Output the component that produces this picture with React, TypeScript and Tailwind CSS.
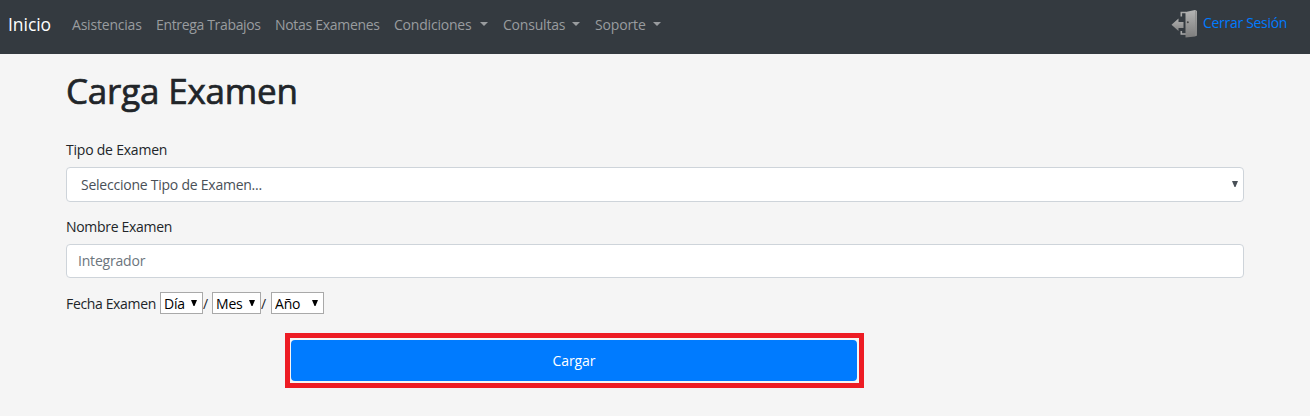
const links = [
  { label: 'Asistencias', box: 'w-[84px]', track: 'tracking-[-0.2px]' },
  { label: 'Entrega Trabajos', box: 'w-[119px]', track: 'tracking-[-0.34px]' },
  { label: 'Notas Examenes', box: 'w-[119px]', track: 'tracking-[-0.3px]' },
];

const menus = [
  { label: 'Condiciones', box: 'w-[109px]', text: 'w-[86px]', track: 'tracking-[-0.2px]' },
  { label: 'Consultas', box: 'w-[92px]', text: 'w-[69px]', track: 'tracking-[-0.2px]' },
  { label: 'Soporte', box: 'w-[80px]', text: 'w-[58px]', track: 'tracking-[-0.15px]' },
];

const dates = [
  { label: 'Día', box: 'w-[43px]', gap: 'w-[9px]' },
  { label: 'Mes', box: 'w-[49px]', gap: 'w-[10px]' },
  { label: 'Año', box: 'w-[53px]', gap: '' },
];

function DoorIcon() {
  return (
    <svg width="27" height="30" viewBox="0 0 27 30" className="block shrink-0">
      <defs>
        <linearGradient id="door" x1="0" y1="0" x2="0" y2="1">
          <stop offset="0" stopColor="#b4b4b4" />
          <stop offset="1" stopColor="#7c7c7c" />
        </linearGradient>
        <linearGradient id="arrow" x1="0" y1="0" x2="0" y2="1">
          <stop offset="0" stopColor="#b0b0b0" />
          <stop offset="1" stopColor="#858585" />
        </linearGradient>
      </defs>
      <path d="M10.3 7.5V3.5H15M10.3 22v3H15" fill="none" stroke="#a8a8a8" strokeWidth="1.6" />
      <path d="M14.5 3 24 1l2 1V26.5L24 27.5l-9.5 1Z" fill="url(#door)" />
      <path d="M24.8 1.8V27" stroke="#8b8b8b" strokeWidth="1" />
      <circle cx="16.8" cy="13.3" r="1" fill="#444" />
      <path d="M.5 15.7 7.5 9.5V13H12.5v6H7.5V22Z" fill="url(#arrow)" />
    </svg>
  );
}

function Arrow() {
  return (
    <svg width="6" height="6" viewBox="0 0 6 6" className="block">
      <path d="M0 0h6L3.5 6h-1Z" fill="currentColor" />
    </svg>
  );
}

export default function App() {
  return (
    <div className="h-[416px] w-[1310px] overflow-hidden bg-[#f5f5f5] font-['Open_Sans','Noto_Sans',sans-serif] text-[14px] leading-[21px] whitespace-nowrap text-[#212529]">
      <nav className="flex h-[54px] bg-[#343a40] text-[#999c9f]">
        <a className="w-[72px] pt-[14px] pl-[8px] text-[17.5px] tracking-[-0.05px] text-white">Inicio</a>
        <div className="flex flex-1 pt-[14px]">
          {links.map((l) => (
            <a key={l.label} className={`${l.box} ${l.track}`}>{l.label}</a>
          ))}
          {menus.map((m) => (
            <a key={m.label} className={`flex ${m.box} ${m.track}`}>
              <span className={m.text}>{m.label}</span>
              <svg width="8" height="4" viewBox="0 0 8 4" className="mt-[8px]">
                <path d="M0 0h8L4 4Z" fill="currentColor" />
              </svg>
            </a>
          ))}
        </div>
        <a className="flex w-[139px] pt-[9px] text-[#007bff]">
          <DoorIcon />
          <span className="ml-[5px] pt-[3px] tracking-[-0.3px]">Cerrar Sesión</span>
        </a>
      </nav>
      <main className="px-[66px]">
        <h1 className="h-[85px] pt-[16px] text-[35px] leading-[42px] font-medium tracking-[-0.2px] [-webkit-text-stroke:0.7px_#212529]">Carga Examen</h1>
        <label className="block h-[28px] tracking-[-0.22px]">Tipo de Examen</label>
        <div className="relative h-[35px] text-[#495057]">
          <select className="block h-full w-full appearance-none rounded-[4px] border border-[#ced4da] bg-white pl-[14px] tracking-[-0.24px]">
            <option>Seleccione Tipo de Examen...</option>
          </select>
          <span className="absolute top-[14px] right-[6px]"><Arrow /></span>
        </div>
        <label className="mt-[14px] block h-[28px] tracking-[-0.3px]">Nombre Examen</label>
        <input
          placeholder="Integrador"
          className="block h-[34px] w-full rounded-[4px] border border-[#ced4da] bg-white pb-[2px] pl-[11px] tracking-[-0.2px] placeholder:text-[#6c757d]"
        />
        <div className="mt-[14px] flex h-[22px]">
          <span className="w-[94px] pt-[1px] tracking-[-0.35px]">Fecha Examen</span>
          {dates.map((d) => (
            <div key={d.label} className="flex">
              <div className={`relative h-[22px] text-black ${d.box}`}>
                <select className="block h-full w-full appearance-none border border-[#a9a9a9] bg-white pl-[3px] tracking-[-0.2px]">
                  <option>{d.label}</option>
                </select>
                <span className="absolute top-[8px] right-[6px]"><Arrow /></span>
              </div>
              {d.gap && <span className={`pt-[1px] ${d.gap}`}>/</span>}
            </div>
          ))}
        </div>
        <div className="mt-[19px] ml-[219px] h-[55px] w-[579px] border-[5px] border-[#ed1c24] pt-[2px] pr-[2px] pb-[2px] pl-[1px]">
          <button className="block h-full w-full rounded-[4px] bg-[#007bff] text-center tracking-[-0.1px] text-white">Cargar</button>
        </div>
      </main>
    </div>
  );
}
